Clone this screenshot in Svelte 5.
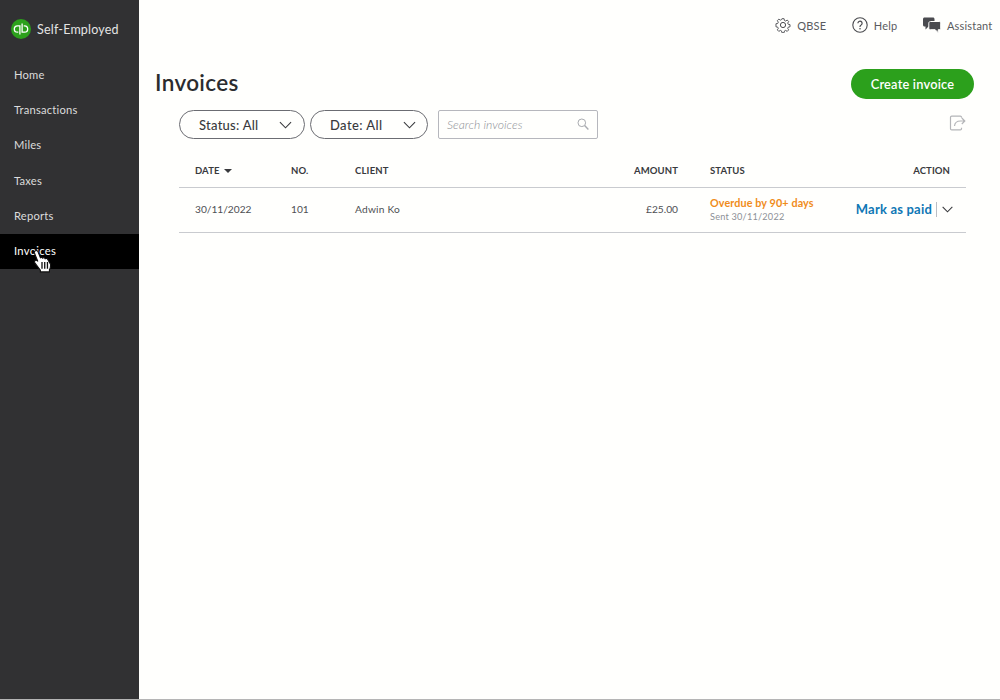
<script lang="ts">
  const navItems = ['Home', 'Transactions', 'Miles', 'Taxes', 'Reports', 'Invoices'];
  const active = 'Invoices';
</script>

<div class="page">
  <aside class="sidebar">
    <div class="brand">
      <svg class="logo" viewBox="0 0 20 20" width="20" height="20">
        <circle cx="10" cy="10" r="10" fill="#2ca01c" />
        <path d="M8.900 15.600V6.800H6.500a3.200 3.200 0 0 0 0 6.400h.8M11.100 4.400V13.200H13.500a3.200 3.200 0 0 0 0-6.400h-.8" fill="none" stroke="#fff" stroke-width="1.300" />
      </svg>
      <span>Self-Employed</span>
    </div>
    <nav class="nav">
      {#each navItems as item}
        <div class="nav-item" class:active={item === active}>{item}</div>
      {/each}
    </nav>
    <svg class="cursor" viewBox="0 0 18 22" width="20" height="24">
      <path d="M3 1.600c1-.5 2-.1 2.400 1L7.500 8c.8-.6 1.800-.4 2.200.4.7-.6 1.800-.4 2.200.5.8-.5 2-.2 2.400.8L16.800 14c.3 2-.2 3.500-1 5v2H7.500v-1.500L2.600 13c-.7-1-.5-2 .2-2.400.7-.4 1.600-.2 2.200.5l.2.400L2 3.500c-.3-.8.2-1.500 1-1.900z" fill="#fff" stroke="#111" stroke-width="1" />
      <path d="M9 12v6M11.500 12v6M14 12v6" stroke="#111" stroke-width="1.200" fill="none" />
    </svg>
  </aside>

  <main class="main">
    <header class="topbar">
      <div class="top-link">
        <svg viewBox="0 0 16 16" width="16" height="16" fill="none" stroke="#4a4b4f" stroke-width="1">
          <circle cx="8" cy="8" r="2.600" />
          <path d="M6.800 1h2.400l.4 2 1.300.6 1.800-1.100 1.600 1.700-1.100 1.700.6 1.300 2 .4v2.400l-2 .4-.6 1.300 1.100 1.700-1.600 1.700-1.800-1.100-1.300.6-.4 2H6.800l-.4-2-1.300-.6-1.800 1.100-1.600-1.700 1.100-1.700-.6-1.300-2-.4V6.600l2-.4.6-1.300-1.100-1.700 1.600-1.700 1.800 1.100 1.300-.6z" transform="translate(.8 .8) scale(.9)" />
        </svg>
        <span>QBSE</span>
      </div>
      <div class="top-link">
        <svg viewBox="0 0 16 16" width="16" height="16" fill="none" stroke="#4a4b4f" stroke-width="1.100">
          <circle cx="8" cy="8" r="7.200" />
          <path d="M5.900 6.200a2.100 2.100 0 1 1 3.200 1.800c-.7.400-1.100.9-1.100 1.700v.3" stroke-width="1.200" />
          <circle cx="8" cy="11.800" r=".8" fill="#4a4b4f" stroke="none" />
        </svg>
        <span>Help</span>
      </div>
      <div class="top-link">
        <svg viewBox="0 0 18 16" width="18" height="16" fill="#4a4b4f">
          <path d="M1.500 .5h8.500c.8 0 1.500.7 1.500 1.500v6c0 .8-.7 1.500-1.500 1.500H5.500L2.500 12.500V9.500h-1C.7 9.500 0 8.800 0 8V2C0 1.200.7.500 1.500.5z" />
          <path d="M7.500 4.500h8.500c1 0 1.700.7 1.700 1.600v5c0 .9-.7 1.600-1.700 1.600h-.8v3l-3-3H7.500c-1 0-1.700-.7-1.700-1.600v-5c0-.9.7-1.600 1.700-1.600z" stroke="#fffffd" stroke-width="1" />
        </svg>
        <span>Assistant</span>
      </div>
    </header>

    <div class="title-row">
      <h1>Invoices</h1>
      <button class="create">Create invoice</button>
    </div>

    <div class="content">
      <div class="filters">
        <button class="pill status">
          <span>Status: All</span>
          <svg viewBox="0 0 14 8" width="13" height="8" fill="none" stroke="#393a3d" stroke-width="1.200"><path d="M1 1l6 6 6-6" /></svg>
        </button>
        <button class="pill date">
          <span>Date: All</span>
          <svg viewBox="0 0 14 8" width="13" height="8" fill="none" stroke="#393a3d" stroke-width="1.200"><path d="M1 1l6 6 6-6" /></svg>
        </button>
        <div class="search">
          <span>Search invoices</span>
          <svg viewBox="0 0 12 12" width="12" height="12" fill="none" stroke="#a9abb0" stroke-width="1"><circle cx="4.800" cy="4.800" r="3.800" /><path d="M7.600 7.600l3.800 3.800" stroke-width="1.400" /></svg>
        </div>
        <svg class="export" viewBox="0 0 17 16" width="17" height="16" fill="none" stroke="#b4b5b8" stroke-width="1.200">
          <path d="M12.500 2.800V2.300c0-.7-.5-1.200-1.200-1.200H2.700c-.7 0-1.200.5-1.200 1.200v11.400c0 .7.500 1.200 1.200 1.200h8.600c.7 0 1.200-.5 1.200-1.200v-1" />
          <path d="M5.500 11c.3-3 2.500-5 6-5h4M12.800 3l3 3-3 3" />
        </svg>
      </div>

      <div class="table">
        <div class="row head">
          <div class="date-col">DATE <i class="sort"></i></div>
          <div class="no-col">NO.</div>
          <div class="client-col">CLIENT</div>
          <div class="amount-col">AMOUNT</div>
          <div class="status-col">STATUS</div>
          <div class="action-col">ACTION</div>
        </div>
        <div class="row body">
          <div class="date-col">30/11/2022</div>
          <div class="no-col">101</div>
          <div class="client-col">Adwin Ko</div>
          <div class="amount-col">£25.00</div>
          <div class="status-col">
            <div class="overdue">Overdue by 90+ days</div>
            <div class="sent">Sent 30/11/2022</div>
          </div>
          <div class="action-col">
            <span class="mark">Mark as paid</span>
            <span class="divider"></span>
            <svg class="row-chevron" viewBox="0 0 12 7" width="11" height="7" fill="none" stroke="#393a3d" stroke-width="1.200"><path d="M.7.700l5.300 5.300 5.300-5.300" /></svg>
          </div>
        </div>
      </div>
    </div>
  </main>
</div>

<style>
  :global(body) {
    margin: 0;
    background: #fffffd;
    font-family: Lato, "Open Sans", sans-serif;
  }

  .page {
    display: flex;
    height: 699px;
    border-bottom: 1px solid #b5b5b5;
    color: #393a3d;
    overflow: hidden;
  }

  .sidebar {
    position: relative;
    width: 139px;
    flex: none;
    background: #313133;
    color: #e4e4e4;
  }

  .brand {
    display: flex;
    align-items: center;
    gap: 6px;
    padding: 19px 0 0 11px;
    height: 20px;
    font-size: 12.500px;
    letter-spacing: 0.2px;
  }

  .logo {
    flex: none;
  }

  .nav {
    margin-top: 19px;
  }

  .nav-item {
    height: 35.200px;
    line-height: 34.500px;
    padding-left: 14px;
    font-size: 11.200px;
    letter-spacing: 0.2px;
    color: #dcdcdc;
  }

  .nav-item.active {
    background: #000;
    color: #fff;
    letter-spacing: 0.3px;
  }

  .cursor {
    position: absolute;
    left: 32px;
    top: 249px;
  }

  .main {
    flex: 1;
    min-width: 0;
  }

  .topbar {
    display: flex;
    justify-content: flex-end;
    align-items: center;
    gap: 25.500px;
    height: 50px;
    padding-right: 7.500px;
  }

  .top-link {
    display: flex;
    align-items: center;
    gap: 6px;
    font-size: 11px;
    letter-spacing: 0.2px;
    color: #5a5b5f;
  }

  .title-row {
    display: flex;
    justify-content: space-between;
    align-items: center;
    height: 30px;
    margin-top: 19px;
    padding: 0 26px 0 16px;
  }

  h1 {
    margin: 0 0 3px;
    font-size: 22.500px;
    font-weight: 600;
    color: #2b2c2f;
    letter-spacing: 0.35px;
  }

  .create {
    width: 123px;
    height: 30px;
    padding: 0 0 1px;
    border: none;
    border-radius: 15px;
    background: #2ca01c;
    color: #fff;
    font: 600 12.800px Lato, sans-serif;
    letter-spacing: 0.2px;
  }

  .content {
    padding: 10px 34px 0 40px;
  }

  .filters {
    display: flex;
    align-items: center;
    height: 30px;
  }

  .pill {
    display: flex;
    align-items: center;
    justify-content: space-between;
    box-sizing: border-box;
    height: 29px;
    padding: 1px 12px 0 19px;
    border: 1px solid #6b6c72;
    border-radius: 15px;
    background: #fffffd;
    color: #393a3d;
    font: 500 13px Lato, sans-serif;
    letter-spacing: 0.25px;
  }

  .pill.status {
    width: 126px;
    margin-right: 5px;
  }

  .pill.date {
    width: 118px;
    margin-right: 10px;
    padding-right: 11px;
    letter-spacing: 0.4px;
  }

  .search {
    display: flex;
    align-items: center;
    justify-content: space-between;
    box-sizing: border-box;
    width: 160px;
    height: 29px;
    padding: 0 8px;
    border: 1px solid #b6b7bd;
    border-radius: 2px;
    font-size: 12.200px;
    font-style: italic;
    font-weight: 300;
    color: #8d9096;
  }

  .export {
    margin: 0 0 2px auto;
  }

  .table {
    margin-top: 17px;
  }

  .row {
    display: grid;
    grid-template-columns: 96px 64px 160px 163px 145px 1fr;
    align-items: center;
    padding: 0 16px;
  }

  .head {
    box-sizing: border-box;
    height: 32px;
    padding-bottom: 3px;
    border-bottom: 1px solid #c9cbcf;
    font-size: 9.500px;
    font-weight: 700;
    letter-spacing: 0.1px;
    color: #393a3d;
  }

  .body {
    box-sizing: border-box;
    height: 45px;
    padding-bottom: 2px;
    border-bottom: 1px solid #c9cbcf;
    font-size: 10.200px;
    color: #4e4f53;
  }

  .client-col {
    letter-spacing: 0.2px;
  }

  .sort {
    display: inline-block;
    margin-left: 2px;
    border-left: 4px solid transparent;
    border-right: 4px solid transparent;
    border-top: 4px solid #393a3d;
    vertical-align: 1px;
  }

  .amount-col {
    text-align: right;
  }

  .status-col {
    padding-left: 32px;
    white-space: nowrap;
  }

  .action-col {
    display: flex;
    align-items: center;
    justify-content: flex-end;
    white-space: nowrap;
  }

  .overdue {
    font-size: 10.800px;
    font-weight: 700;
    color: #f08c1a;
    letter-spacing: 0.1px;
  }

  .sent {
    margin-top: 2px;
    font-size: 9.200px;
    color: #8d9096;
    letter-spacing: 0.2px;
  }

  .mark {
    font-size: 13px;
    font-weight: 700;
    color: #0f77b5;
    letter-spacing: 0.2px;
  }

  .divider {
    width: 1px;
    height: 15px;
    margin: 0 5px 0 4px;
    background: #babec5;
  }

  .row-chevron {
    margin-right: -3px;
  }
</style>
